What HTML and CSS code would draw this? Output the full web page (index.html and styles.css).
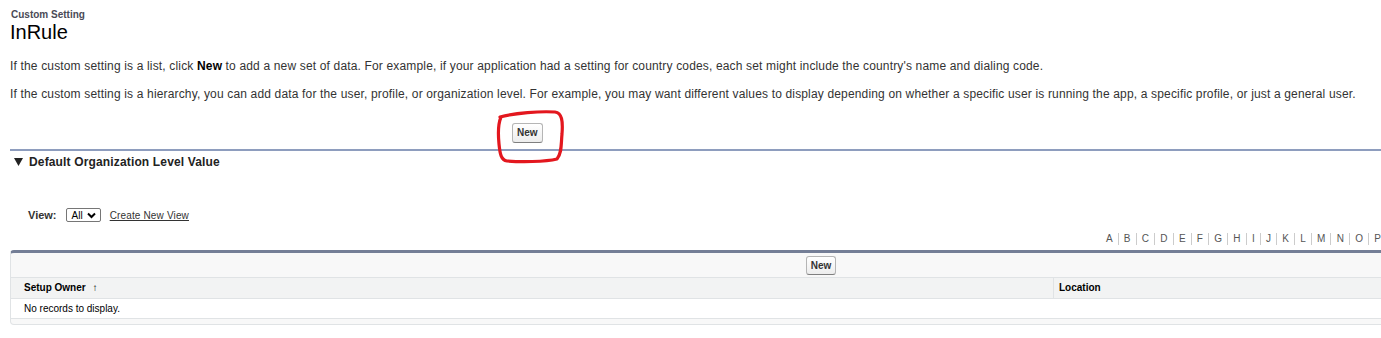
FILE: index.html
```html
<!DOCTYPE html>
<html lang="en">
<head>
    <meta charset="UTF-8">
    <title>Custom Setting: InRule</title>
    <link rel="stylesheet" href="styles.css">
</head>
<body>
    <div class="page">
        <!-- Title -->
        <div class="page-title">
            <div class="page-type">Custom Setting</div>
            <h1>InRule</h1>
        </div>

        <p class="intro">If the custom setting is a list, click <b>New</b> to add a new set of data. For example, if your application had a setting for country codes, each set might include the country's name and dialing code.</p>
        <p class="intro">If the custom setting is a hierarchy, you can add data for the user, profile, or organization level. For example, you may want different values to display depending on whether a specific user is running the app, a specific profile, or just a general user.</p>

        <div class="top-buttons">
            <span class="btn-wrap">
                <button class="btn">New</button>
                <!-- hand drawn marker -->
                <svg class="marker" width="72" height="56" viewBox="0 0 72 56">
                    <path d="M5 8 C 20 4, 45 2, 60 3 C 67 4, 68 12, 67 25 C 66 35, 67 44, 62 50 C 50 53, 25 53, 12 52 C 6 51, 5 45, 4 35 C 3 25, 3 15, 6 8"
                          fill="none" stroke="#e3171e" stroke-width="3.2" stroke-linecap="round" stroke-linejoin="round"/>
                </svg>
            </span>
        </div>

        <!-- Section -->
        <div class="section-header">
            <svg class="twisty" width="9" height="8" viewBox="0 0 9 8"><polygon points="0,0 9,0 4.5,8" fill="#222"/></svg>
            <h3>Default Organization Level Value</h3>
        </div>

        <div class="view-row">
            <label>View:</label>
            <span class="select">All
                <svg width="9" height="7" viewBox="0 0 9 7"><path d="M1 1.5 L4.5 5 L8 1.5" fill="none" stroke="#000" stroke-width="2"/></svg>
            </span>
            <a href="#" class="link">Create New View</a>
        </div>

        <div class="alpha">
            <span>A</span><span>B</span><span>C</span><span>D</span><span>E</span><span>F</span><span>G</span><span>H</span><span>I</span><span>J</span><span>K</span><span>L</span><span>M</span><span>N</span><span>O</span><span>P</span>
        </div>

        <!-- List -->
        <div class="list-block">
            <div class="list-buttons">
                <button class="btn">New</button>
            </div>
            <div class="list-head">
                <div class="col-owner">Setup Owner <span class="sort">&#8593;</span></div>
                <div class="col-location">Location</div>
            </div>
            <div class="list-row">No records to display.</div>
            <div class="list-foot"></div>
        </div>
    </div>
</body>
</html>
```

FILE: styles.css
```css
html {
    overflow: hidden;
}

body {
    margin: 0;
    padding: 0;
    font-family: 'Liberation Sans', Arial, sans-serif;
    color: #333;
    background-color: #fff;
}

.page {
    width: 1630px;
    padding: 9px 0 0 10px;
}

/* Title */
.page-title {
    margin-bottom: 16px;
}

.page-type {
    font-size: 10px;
    font-weight: bold;
    line-height: 12px;
    color: #4a4a56;
    padding-left: 1px;
}

.page-title h1 {
    margin: 0;
    font-size: 20px;
    font-weight: normal;
    line-height: 22px;
    color: #000;
}

.intro {
    margin: 0 0 14px 0;
    font-size: 12px;
    line-height: 14px;
    letter-spacing: 0.16px;
    color: #333;
}

.intro b {
    color: #000;
}

/* Buttons */
.top-buttons {
    width: 1620px;
    box-sizing: border-box;
    padding: 7px 0 0 502px;
    height: 36px;
    border-bottom: 2px solid #8e9dbe;
}

.btn-wrap {
    position: relative;
    display: inline-block;
}

.btn {
    font-family: 'Liberation Sans', Arial, sans-serif;
    font-size: 10px;
    font-weight: bold;
    color: #333;
    height: 20px;
    padding: 0 4px;
    border: 1px solid #b5b5b5;
    border-bottom-color: #7f7f7f;
    border-radius: 3px;
    background: linear-gradient(#ffffff, #ededed);
    cursor: pointer;
}

.marker {
    position: absolute;
    left: -17px;
    top: -13px;
    pointer-events: none;
}

.section-header {
    display: flex;
    align-items: center;
    gap: 6px;
    width: 1620px;
    padding: 4px 0 0 4px;
    height: 14px;
}

.section-header h3 {
    margin: 0;
    font-size: 12px;
    font-weight: bold;
    letter-spacing: 0.15px;
    color: #222;
}

/* View */
.view-row {
    display: flex;
    align-items: center;
    margin-top: 39px;
    padding-left: 18px;
    height: 14px;
    font-size: 11px;
}

.view-row label {
    font-weight: bold;
    color: #333;
    margin-right: 9px;
}

.select {
    display: inline-flex;
    align-items: center;
    gap: 4px;
    height: 12px;
    padding: 0 4px 0 5px;
    border: 1px solid #767676;
    border-radius: 2px;
    font-size: 10px;
    color: #000;
}

.link {
    margin-left: 9px;
    font-size: 10px;
    letter-spacing: 0.15px;
    color: #333;
}

/* Alphabet */
.alpha {
    display: flex;
    justify-content: flex-end;
    width: 1371px;
    margin-top: 11px;
    font-size: 10px;
    line-height: 12px;
    color: #555;
}

.alpha span {
    padding: 0 5px 0 5.3px;
    border-left: 1px solid #ccc;
}

.alpha span:first-child {
    border-left: none;
}

.alpha span:last-child {
    padding-right: 0;
}

/* List */
.list-block {
    width: 1620px;
    margin-top: 5px;
    border: 1px solid #e0e3e5;
    border-top: 3px solid #747e96;
    border-radius: 4px;
    background-color: #f8f8f8;
}

.list-buttons {
    display: flex;
    justify-content: center;
    padding: 3px 0 2px;
}

.list-buttons .btn {
    height: 19px;
}

.list-head {
    display: flex;
    height: 20px;
    background-color: #f2f3f3;
    border-top: 1px solid #e0e3e5;
    border-bottom: 1px solid #e0e3e5;
    font-size: 10px;
    font-weight: bold;
    color: #000;
}

.col-owner {
    width: 1029px;
    padding-left: 13px;
    line-height: 20px;
}

.sort {
    font-weight: normal;
    margin-left: 4px;
}

.col-location {
    flex: 1;
    padding-left: 5px;
    line-height: 20px;
    border-left: 1px solid #e0e3e5;
}

.list-row {
    height: 19px;
    line-height: 19px;
    padding-left: 13px;
    font-size: 10px;
    color: #000;
    background-color: #fff;
    border-bottom: 1px solid #e0e3e5;
}

.list-foot {
    height: 5px;
}
```
